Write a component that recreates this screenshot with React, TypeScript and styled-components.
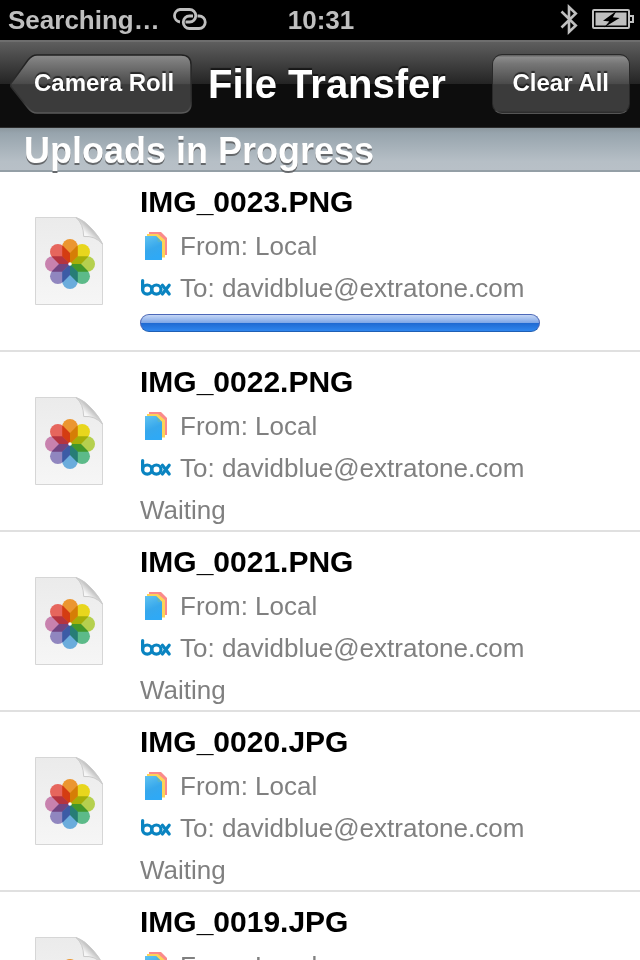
import React from "react";
import styled, { createGlobalStyle } from "styled-components";

const GlobalStyle = createGlobalStyle`
  * { box-sizing: border-box; }
  body {
    margin: 0;
    background: #fff;
    font-family: "Liberation Sans", Arial, Helvetica, sans-serif;
  }
`;

const Screen = styled.div`
  display: flex;
  flex-direction: column;
  height: 100vh;
  overflow: hidden;
`;

const StatusBar = styled.header`
  display: grid;
  grid-template-columns: 1fr auto 1fr;
  align-items: center;
  flex: none;
  height: 40px;
  padding: 0 6px 0 8px;
  background: #000;
  color: #bfbfbf;
  font-size: 26px;
  font-weight: bold;
  line-height: 40px;
`;

const StatusGroup = styled.div<{ $end?: boolean }>`
  display: flex;
  align-items: center;
  justify-content: ${(p) => (p.$end ? "flex-end" : "flex-start")};
  gap: 12px;
`;

const NavBar = styled.nav`
  display: flex;
  align-items: center;
  flex: none;
  height: 88px;
  padding: 0 10px 2px;
  border-top: 2px solid #6e6e6e;
  border-bottom: 1px solid #2b2b2b;
  background: linear-gradient(#5e5e5e 0, #232323 50%, #0d0d0d 50%, #0d0d0d 100%);
  color: #fff;
  text-shadow: 0 -2px 1px rgba(0, 0, 0, 0.6);
`;

const NavTitle = styled.h1`
  flex: 1;
  margin: 0;
  padding: 0 16px;
  font-size: 40px;
  line-height: 48px;
  white-space: nowrap;
`;

const NavButton = styled.button<{ $back?: boolean }>`
  position: relative;
  flex: none;
  height: 60px;
  padding: ${(p) => (p.$back ? "0 18px 2px 24px" : "0 20px 2px")};
  border: ${(p) => (p.$back ? "0" : "1px solid #292929")};
  border-bottom-color: #555;
  border-radius: 10px;
  background: ${(p) =>
    p.$back
      ? "none"
      : "linear-gradient(#5a5a5a 0, #8b8b8b 4%, #767676 15%, #4a4a4a 50%, #3b3b3b 51%, #3b3b3b 96%, #292929 100%)"};
  color: inherit;
  font: bold 24px "Liberation Sans", Arial, sans-serif;
  text-shadow: inherit;
  white-space: nowrap;
`;

const ButtonShape = styled.svg`
  position: absolute;
  inset: 0;
  width: 100%;
  height: 100%;
`;

const ButtonLabel = styled.span`
  position: relative;
`;

const SectionHeader = styled.h2`
  flex: none;
  height: 44px;
  margin: 0;
  padding: 0 24px;
  border-bottom: 2px solid #949fa6;
  background: linear-gradient(#8c979e 0, #97a4ad 12%, #b6bfc6 80%, #b8c0c7 100%);
  color: #fff;
  font-size: 36px;
  line-height: 46px;
  text-shadow: 0 2px 0 #66696c;
`;

const TransferList = styled.ul`
  flex: 1;
  min-height: 0;
  margin: 0;
  padding: 0;
  overflow-y: auto;
  scrollbar-width: none;
  list-style: none;
`;

const TransferRow = styled.li`
  display: grid;
  grid-template-columns: 140px 1fr;
  height: 180px;
  border-bottom: 2px solid #e0e0e0;
`;

const Thumbnail = styled.div`
  padding: 44px 0 0 34px;

  svg { display: block; }
`;

const Details = styled.div`
  padding-top: 7px;
`;

const FileName = styled.h3`
  margin: 0;
  color: #000;
  font-size: 30px;
  line-height: 46px;
`;

const DetailLine = styled.div`
  display: flex;
  align-items: center;
  gap: 8px;
  height: 42px;
  color: #808080;
  font-size: 26px;
  line-height: 42px;
  white-space: nowrap;
`;

const ProgressTrack = styled.div`
  width: 80%;
  height: 18px;
  margin-top: 5px;
  border-radius: 9px;
  background: #e4e4e4;
`;

const ProgressFill = styled.div`
  height: 100%;
  border: 1px solid #4c68b8;
  border-bottom-color: #1f5fb4;
  border-radius: 9px;
  background: linear-gradient(#c5d7f6 0, #7da5e6 50%, #1f69d2 51%, #2f86ee 100%);
`;

const LinkIcon = () => (
  <svg width="36" height="26" viewBox="0 0 36 26" fill="none" stroke="#bfbfbf" strokeWidth="2.8" aria-hidden="true">
    <path d="M8 15A6.3 6.3 0 0 1 8 2.5H17.5A6.2 6.2 0 0 1 17.5 15H13.5" />
    <path d="M21 9H17.5A6.25 6.25 0 0 0 17.5 21.5H27A6.25 6.25 0 0 0 27 9L25.5 9" />
  </svg>
);

const BluetoothIcon = () => (
  <svg width="20" height="32" viewBox="0 0 20 32" fill="none" stroke="#bfbfbf" strokeWidth="2.6" aria-hidden="true">
    <path d="M1.5 7.5 15.8 21.5 9 28V3L15.8 9.5 1.5 23.5" />
  </svg>
);

const BatteryIcon = () => (
  <svg width="42" height="22" viewBox="0 0 42 22" role="img" aria-label="Charging">
    <rect x="1" y="1" width="36" height="18" rx="1" fill="none" stroke="#bfbfbf" strokeWidth="2" />
    <rect x="3.5" y="3.5" width="31" height="13" fill="#bfbfbf" />
    <path d="M38 6h4v8h-4v-2h2V8h-2z" fill="#bfbfbf" />
    <path d="M24.5 2 11 11.7l6.3.8L12 18.6 27.6 9l-6.8-.8z" fill="#000" />
  </svg>
);

const petals = ["#eb9630", "#e8d61d", "#b5d04e", "#5cba89", "#6aacdc", "#9086bf", "#c882ae", "#e6665d"];

const Petal = styled.path`
  mix-blend-mode: multiply;
`;

const Flower = styled.g`
  isolation: isolate;
`;

const PhotoFileIcon = () => (
  <svg width="70" height="90" viewBox="0 0 70 90" aria-hidden="true">
    <defs>
      <linearGradient id="paper" x1="0" y1="0" x2="0" y2="1">
        <stop offset="0" stopColor="#ebebeb" />
        <stop offset="1" stopColor="#f6f6f6" />
      </linearGradient>
      <linearGradient id="curl" x1="0.2" y1="0.8" x2="0.58" y2="0.42">
        <stop offset="0" stopColor="#fff" />
        <stop offset="0.5" stopColor="#f4f4f4" />
        <stop offset="1" stopColor="#bdbdbd" />
      </linearGradient>
    </defs>
    <path d="M1.5 1.5H42Q50 4 58 13T68.5 28V88.5H1.5Z" fill="url(#paper)" stroke="#d6d6d6" />
    <path d="M42 1.5Q49.5 8 49.7 20.5Q61 19.5 68.5 28Q65 21 58 13T42 1.5Z" fill="url(#curl)" stroke="#cbcbcb" />
    <Flower transform="translate(36 48)">
      {petals.map((color, i) => (
        <Petal
          key={color}
          d="M-7.8-17.2A7.8 7.8 0 0 1 7.8-17.2V-7.8L0 0L-7.8-7.8Z"
          fill={color}
          transform={`rotate(${i * 45})`}
        />
      ))}
      <circle r="1.8" fill="#fff" />
    </Flower>
  </svg>
);

const LocalIcon = () => (
  <svg width="32" height="32" viewBox="0 0 32 32" aria-hidden="true">
    <defs>
      <linearGradient id="sheet" x1="0" y1="0" x2="0.3" y2="1">
        <stop offset="0" stopColor="#61c3f0" />
        <stop offset="0.6" stopColor="#37a8ec" />
        <stop offset="1" stopColor="#2fa9f5" />
      </linearGradient>
    </defs>
    <path d="M9 2H21L27 8V25H9Z" fill="#fb8a8b" />
    <path d="M7 4H18L25 10V27.5H7Z" fill="#fcd458" />
    <path d="M5 6H16L22 12V30H5Z" fill="url(#sheet)" />
    <path d="M16 6 22 12H18Z" fill="#58b4ca" />
  </svg>
);

const BoxLogo = () => (
  <svg width="32" height="32" viewBox="0 0 32 32" fill="none" stroke="#0a84c1" strokeWidth="3.2" strokeLinecap="round" role="img" aria-label="box">
    <path d="M2.6 8.6V17.6" />
    <circle cx="7.2" cy="17.6" r="4.6" />
    <circle cx="16.4" cy="17.6" r="4.6" />
    <path d="M22.4 13.2 29.2 22M29.2 13.2 22.4 22" />
  </svg>
);

interface Transfer {
  name: string;
  progress?: number;
}

const transfers: Transfer[] = [
  { name: "IMG_0023.PNG", progress: 100 },
  { name: "IMG_0022.PNG" },
  { name: "IMG_0021.PNG" },
  { name: "IMG_0020.JPG" },
  { name: "IMG_0019.JPG" },
];

export default function App() {
  return (
    <Screen>
      <GlobalStyle />
      <StatusBar>
        <StatusGroup>
          <span>Searching…</span>
          <LinkIcon />
        </StatusGroup>
        <span>10:31</span>
        <StatusGroup $end>
          <BluetoothIcon />
          <BatteryIcon />
        </StatusGroup>
      </StatusBar>
      <NavBar>
        <NavButton $back type="button">
          <ButtonShape viewBox="0 0 182 60" preserveAspectRatio="none" aria-hidden="true">
            <defs>
              <linearGradient id="back" x1="0" y1="0" x2="0" y2="1">
                <stop offset="0" stopColor="#8b8b8b" />
                <stop offset="0.15" stopColor="#767676" />
                <stop offset="0.5" stopColor="#4a4a4a" />
                <stop offset="0.51" stopColor="#3b3b3b" />
                <stop offset="1" stopColor="#3b3b3b" />
              </linearGradient>
              <linearGradient id="backEdge" x1="0" y1="0" x2="0" y2="1">
                <stop offset="0" stopColor="#202020" />
                <stop offset="0.8" stopColor="#333" />
                <stop offset="1" stopColor="#5a5a5a" />
              </linearGradient>
            </defs>
            <path
              d="M27 1H171Q181 1 181 11V49Q181 59 171 59H27Q22 59 18 54L2 34Q-1 31 2 28L18 6Q22 1 27 1Z"
              fill="url(#back)"
              stroke="url(#backEdge)"
              strokeWidth="1.5"
            />
          </ButtonShape>
          <ButtonLabel>Camera Roll</ButtonLabel>
        </NavButton>
        <NavTitle>File Transfer</NavTitle>
        <NavButton type="button">Clear All</NavButton>
      </NavBar>
      <SectionHeader>Uploads in Progress</SectionHeader>
      <TransferList>
        {transfers.map((item) => (
          <TransferRow key={item.name}>
            <Thumbnail>
              <PhotoFileIcon />
            </Thumbnail>
            <Details>
              <FileName>{item.name}</FileName>
              <DetailLine>
                <LocalIcon />
                From: Local
              </DetailLine>
              <DetailLine>
                <BoxLogo />
                To: davidblue@extratone.com
              </DetailLine>
              {item.progress === undefined ? (
                <DetailLine>Waiting</DetailLine>
              ) : (
                <ProgressTrack
                  role="progressbar"
                  aria-label={`Upload of ${item.name}`}
                  aria-valuenow={item.progress}
                  aria-valuemin={0}
                  aria-valuemax={100}
                >
                  <ProgressFill style={{ width: `${item.progress}%` }} />
                </ProgressTrack>
              )}
            </Details>
          </TransferRow>
        ))}
      </TransferList>
    </Screen>
  );
}
